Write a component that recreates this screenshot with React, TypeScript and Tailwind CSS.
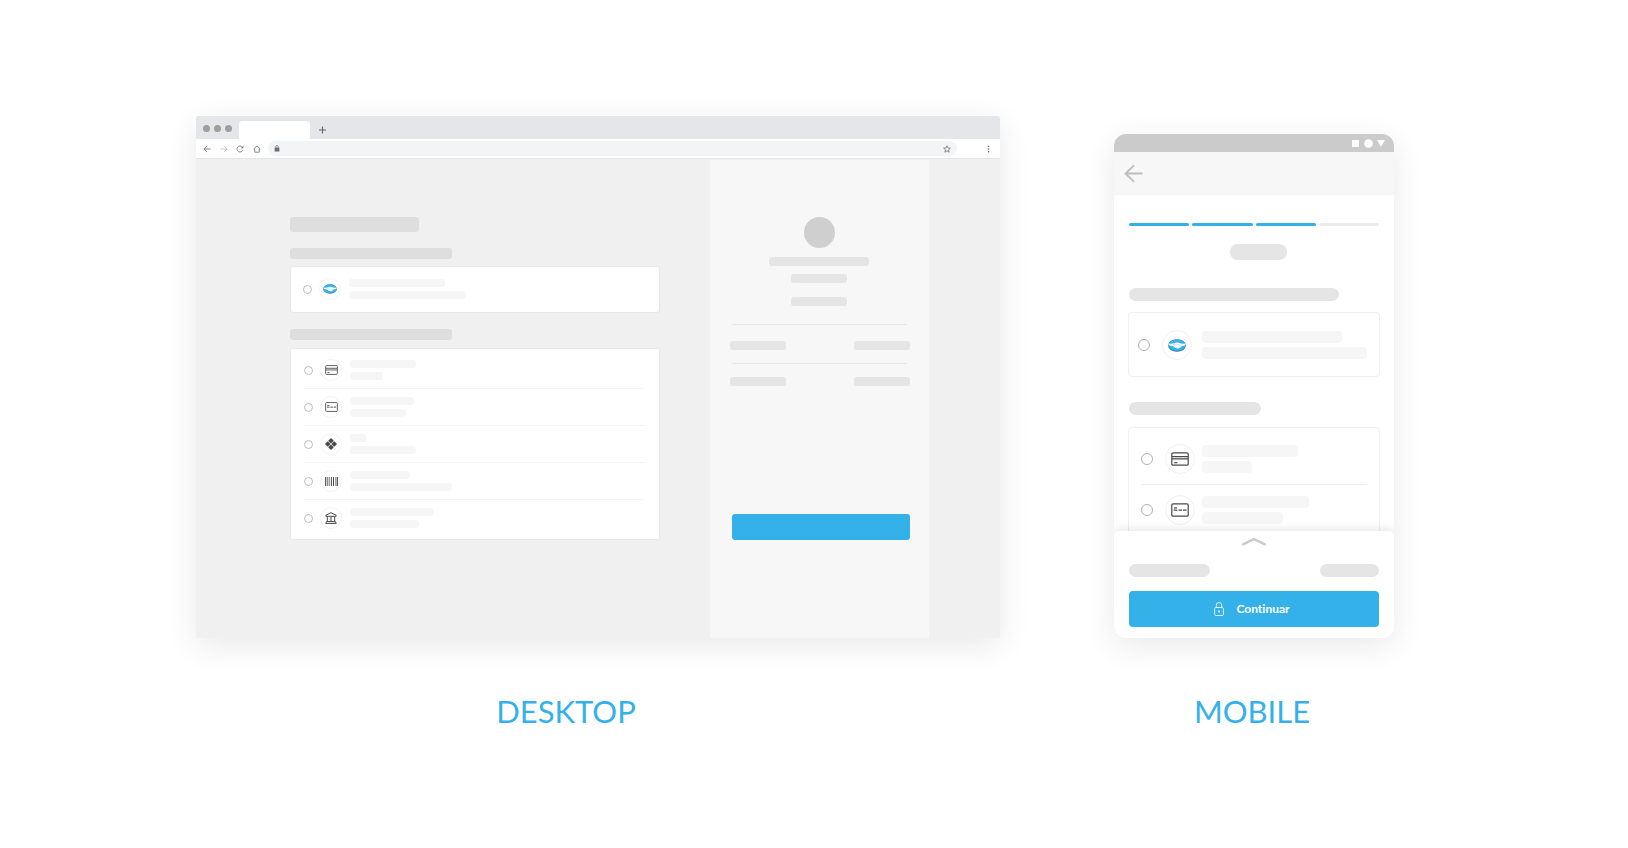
import type { ReactNode } from "react";
import { clsx } from "clsx";

function Bar({ className }: { className: string }) {
  return <div className={className} />;
}

function WalletIcon({ className }: { className: string }) {
  return (
    <svg viewBox="0 0 18 13" className={className} aria-hidden="true">
      <ellipse cx="9" cy="6.5" rx="8.900" ry="6.200" fill="#3a6ea8" />
      <ellipse cx="9" cy="6.200" rx="8.500" ry="5.600" fill="#2fb5ec" />
      <path
        d="M.7 4.500C3 5 5 4.600 6.900 3.900c1.300-.5 3-.5 4.300 0C13 4.600 15 5 17.300 4.500c.2.700.2 1.200.1 1.800-1.500.2-3.100.6-4.200 1.300-.6 1-1.500 1.600-2.600 1.700-.9.500-1.800.3-2.400-.3-1 .1-1.700-.4-2-1.200C4.600 7.100 2.600 6.500.6 6.300.5 5.700.5 5.100.7 4.500z"
        fill="#fff"
      />
      <path
        d="M6.900 4.100 5.600 5.900c.9.500 1.900.1 2.600-.7l1.300-.1 3.500 2.600M6.300 8.200l.9-.8M7.900 9l.8-.9"
        fill="none"
        stroke="#9db0cc"
        strokeWidth=".5"
      />
    </svg>
  );
}

function CardIcon({ className }: { className: string }) {
  return (
    <svg viewBox="0 0 18 14" className={className} fill="none" stroke="#4a4a4a" aria-hidden="true">
      <rect x=".8" y=".8" width="16.400" height="12.400" rx="1.300" strokeWidth="1.200" />
      <path d="M1 4.600h16M1 6.900h16" strokeWidth="1.200" />
      <path d="M3.200 10.700h3.200" strokeWidth="1.200" />
    </svg>
  );
}

function DebitIcon({ className }: { className: string }) {
  return (
    <svg viewBox="0 0 18 14" className={className} fill="none" stroke="#4a4a4a" aria-hidden="true">
      <rect x=".8" y=".8" width="16.400" height="12.400" rx="1.300" strokeWidth="1.200" />
      <path d="M2.700 7.200h3.600M7.500 7.200h3.500M12 7.200h3.500" strokeWidth="1.300" />
      <path d="M3 4.900h3" strokeWidth="1.600" stroke="#777" />
    </svg>
  );
}

function DiamondIcon({ className }: { className: string }) {
  return (
    <svg viewBox="0 0 16 16" className={className} fill="#4a4a4a" aria-hidden="true">
      <g transform="rotate(45 8 8)">
        <rect x="2.200" y="2.200" width="5.500" height="5.500" rx="1.100" />
        <rect x="8.300" y="2.200" width="5.500" height="5.500" rx="1.100" />
        <rect x="2.200" y="8.300" width="5.500" height="5.500" rx="1.100" />
        <rect x="8.300" y="8.300" width="5.500" height="5.500" rx="1.100" />
      </g>
    </svg>
  );
}

function BarcodeIcon({ className }: { className: string }) {
  return (
    <svg viewBox="0 0 13 9" className={className} stroke="#4a4a4a" aria-hidden="true">
      <path d="M.6 0v9M6.400 0v9M8.500 0v9M12.400 0v9" strokeWidth="1" />
      <path d="M2.300 0v9M10.900 0v9" strokeWidth="1.100" stroke="#777" />
      <path d="M4.200 0v9" strokeWidth=".8" />
    </svg>
  );
}

function BankIcon({ className }: { className: string }) {
  return (
    <svg viewBox="0 0 12 12" className={className} fill="none" stroke="#4a4a4a" strokeLinejoin="round" aria-hidden="true">
      <path d="M.9 4.300V3.200L6 .7l5.100 2.500v1.100zM2.300 4.500v5M6 4.500v5M9.700 4.500v5M1.500 9.600h9M.6 11.400h10.800M.9 11.400l.6-1.800M11.100 11.400l-.6-1.800" />
    </svg>
  );
}

type OptionProps = {
  group: string;
  label: string;
  icon: ReactNode;
  lines: [string, string];
};

function DesktopOption({ group, label, icon, lines }: OptionProps) {
  return (
    <label className="flex h-9 items-center">
      <input
        type="radio"
        name={group}
        aria-label={label}
        className="size-[9px] shrink-0 appearance-none rounded-full border border-[#bdbdbd] bg-white checked:border-[#35b1ea] checked:bg-[#35b1ea]"
      />
      <span className="ml-[7px] flex size-[22px] shrink-0 items-center justify-center rounded-full border border-[#f4f4f4]">
        {icon}
      </span>
      <span className="ml-2 flex flex-col gap-1">
        {lines.map((width, i) => (
          <span key={i} className={clsx("h-2 rounded-[3px] bg-[#f6f6f6]", width)} />
        ))}
      </span>
    </label>
  );
}

function MobileOption({ group, label, icon, lines, textGap }: OptionProps & { textGap: string }) {
  return (
    <label className="flex h-[50px] items-center">
      <input
        type="radio"
        name={group}
        aria-label={label}
        className="size-3 shrink-0 appearance-none rounded-full border border-[#b0b0b0] bg-white checked:border-[#35b1ea] checked:bg-[#35b1ea]"
      />
      <span className="ml-3 flex size-[30px] shrink-0 items-center justify-center rounded-full border border-[#f0f0f0]">
        {icon}
      </span>
      <span className={clsx("flex flex-col gap-1", textGap)}>
        {lines.map((width, i) => (
          <span key={i} className={clsx("h-3 rounded-[4px] bg-[#f6f6f6]", width)} />
        ))}
      </span>
    </label>
  );
}

const desktopMethods: { label: string; icon: ReactNode; lines: [string, string] }[] = [
  { label: "Crédito", icon: <CardIcon className="h-[10px] w-[13px]" />, lines: ["w-[66px]", "w-[33px]"] },
  { label: "Débito", icon: <DebitIcon className="h-[10px] w-[13px]" />, lines: ["w-16", "w-14"] },
  { label: "Pix", icon: <DiamondIcon className="size-3" />, lines: ["w-4", "w-[66px]"] },
  { label: "Boleto", icon: <BarcodeIcon className="h-[9px] w-[13px]" />, lines: ["w-[60px]", "w-[102px]"] },
  { label: "Transferencia", icon: <BankIcon className="size-3" />, lines: ["w-[84px]", "w-[69px]"] },
];

function BrowserChrome() {
  return (
    <header>
      <div className="flex h-[23px] items-end bg-[#e4e6ea]">
        <div className="ml-[7px] flex gap-1 self-center pt-px">
          <span className="size-[7px] rounded-full bg-[#9e9e9e]" />
          <span className="size-[7px] rounded-full bg-[#9e9e9e]" />
          <span className="size-[7px] rounded-full bg-[#9e9e9e]" />
        </div>
        <div className="ml-[7px] h-[18px] w-[71px] rounded-t-[4px] bg-white" />
        <button type="button" aria-label="Nueva pestaña" className="ml-2 flex h-[18px] w-2 items-center justify-center">
          <svg viewBox="0 0 8 8" className="size-2" stroke="#5f6368" strokeWidth="1.100" aria-hidden="true">
            <path d="M4.500 .5v7M1 4h7" />
          </svg>
        </button>
      </div>
      <div className="flex h-5 items-center border-b border-[#e4e5e8] bg-white pl-[3px]">
        <nav className="grid w-[66px] grid-cols-4">
          <button type="button" aria-label="Atrás" className="flex justify-center">
            <svg viewBox="0 0 8 8" className="size-2" fill="none" stroke="#6f7276" strokeWidth=".9" aria-hidden="true">
              <path d="M7.500 4H1M4 .9.900 4 4 7.100" />
            </svg>
          </button>
          <button type="button" aria-label="Adelante" className="flex justify-center">
            <svg viewBox="0 0 8 8" className="size-2" fill="none" stroke="#c0c2c5" strokeWidth=".9" aria-hidden="true">
              <path d="M.5 4H7M4 .9 7.100 4 4 7.100" />
            </svg>
          </button>
          <button type="button" aria-label="Recargar" className="flex justify-center">
            <svg viewBox="0 0 8 8" className="size-2" fill="none" stroke="#7d8085" strokeWidth=".9" aria-hidden="true">
              <path d="M6.800 5.200A3 3 0 1 1 6.300 2" />
              <path d="M7.400.6v2.600H4.800z" fill="#7d8085" stroke="none" />
            </svg>
          </button>
          <button type="button" aria-label="Inicio" className="flex justify-center">
            <svg viewBox="0 0 8 8" className="size-2" fill="none" stroke="#7d8085" strokeWidth=".9" aria-hidden="true">
              <path d="M.6 4.100 4 .9l3.400 3.200M1.700 3.500v3.700h4.600V3.500" />
            </svg>
          </button>
        </nav>
        <div className="ml-[3px] flex h-[15px] min-w-0 flex-1 items-center rounded-full bg-[#f2f4f6] pr-[6px] pl-[6px]">
          <svg viewBox="0 0 6 7" className="h-[7px] w-[6px] shrink-0" aria-hidden="true">
            <rect x=".6" y="2.400" width="4.800" height="4.200" rx=".4" fill="#6b6e73" />
            <path d="M1.700 2.600V1.800a1.300 1.300 0 0 1 2.600 0v.8" fill="none" stroke="#6b6e73" strokeWidth=".7" />
          </svg>
          <input type="text" aria-label="Dirección" className="h-3 min-w-0 flex-1 bg-transparent px-2 text-[10px] outline-none" />
          <button type="button" aria-label="Favorito">
            <svg viewBox="0 0 10 10" className="block size-2" fill="none" stroke="#7d8085" strokeWidth="1.100" aria-hidden="true">
              <path d="M5 .9l1.200 2.800 3 .3-2.300 2 .7 3L5 7.400 2.400 9l.7-3L.8 4l3-.3z" />
            </svg>
          </button>
        </div>
        <button type="button" aria-label="Menú" className="flex w-[43px] justify-end pr-[10px]">
          <svg viewBox="0 0 3 8" className="h-2 w-[3px]" fill="#5f6368" aria-hidden="true">
            <circle cx="1.500" cy="1.200" r=".8" />
            <circle cx="1.500" cy="4" r=".8" />
            <circle cx="1.500" cy="6.800" r=".8" />
          </svg>
        </button>
      </div>
    </header>
  );
}

function DesktopSummary() {
  return (
    <aside className="mt-px flex w-[219px] shrink-0 flex-col bg-[#f7f7f7] pt-[57px] pr-[19px] pb-[98px] pl-5">
      <div className="flex flex-col items-center pr-[2px]">
        <Bar className="size-[31px] rounded-full bg-[#cfcfcf]" />
        <Bar className="mt-[9px] h-[9px] w-[100px] rounded-[3px] bg-[#e5e5e5]" />
        <Bar className="mt-2 h-[9px] w-14 rounded-[3px] bg-[#e5e5e5]" />
        <Bar className="mt-[14px] h-[9px] w-14 rounded-[3px] bg-[#e5e5e5]" />
      </div>
      <div className="mt-[18px] mr-[3px] ml-[2px] h-px bg-[#e8e8e8]" />
      <div className="mt-4 flex justify-between">
        <Bar className="h-[9px] w-14 rounded-[3px] bg-[#e5e5e5]" />
        <Bar className="h-[9px] w-14 rounded-[3px] bg-[#e5e5e5]" />
      </div>
      <div className="mt-[13px] mr-[3px] ml-[2px] h-px bg-[#e8e8e8]" />
      <div className="mt-[13px] flex justify-between">
        <Bar className="h-[9px] w-14 rounded-[3px] bg-[#e5e5e5]" />
        <Bar className="h-[9px] w-14 rounded-[3px] bg-[#e5e5e5]" />
      </div>
      <button type="button" aria-label="Continuar" className="mt-auto ml-[2px] h-[26px] rounded-[3px] bg-[#35b1ea]" />
    </aside>
  );
}

function DesktopWindow() {
  return (
    <div className="overflow-hidden rounded-t-[3px] bg-[#f0f0f0] shadow-[0_8px_32px_rgba(0,0,0,0.09)]">
      <BrowserChrome />
      <div className="flex">
        <section className="min-w-0 flex-1 pt-[58px] pr-[50px] pb-[98px] pl-[94px]">
          <Bar className="h-[15px] w-[129px] rounded-[3px] bg-[#dedede]" />
          <Bar className="mt-4 h-[11px] w-[162px] rounded-[3px] bg-[#dedede]" />
          <div className="mt-[7px] rounded-[3px] border border-[#e8e8e8] bg-white pt-1 pr-[14px] pb-[5px] pl-3">
            <DesktopOption
              group="desktop-payment"
              label="Mercado Pago"
              icon={<WalletIcon className="h-[10px] w-[14px]" />}
              lines={["w-24", "w-[117px]"]}
            />
          </div>
          <Bar className="mt-4 h-[11px] w-[162px] rounded-[3px] bg-[#dedede]" />
          <div className="mt-2 divide-y divide-[#f4f4f4] rounded-[3px] border border-[#e8e8e8] bg-white py-[3px] pr-[14px] pl-[13px]">
            {desktopMethods.map((method) => (
              <div key={method.label}>
                <DesktopOption group="desktop-payment" {...method} />
              </div>
            ))}
          </div>
        </section>
        <DesktopSummary />
        <div className="w-[71px] shrink-0" />
      </div>
    </div>
  );
}

function Phone() {
  return (
    <div className="overflow-hidden rounded-[12px] bg-white shadow-[0_8px_32px_rgba(0,0,0,0.09)]">
      <div className="flex h-[18px] items-center justify-end bg-[#cbcbcb] pr-[9px]">
        <svg viewBox="0 0 34 9" className="h-[9px] w-[34px]" fill="#fff" aria-hidden="true">
          <rect x="1" y="1" width="7" height="7" />
          <circle cx="17.500" cy="4.500" r="4.300" />
          <path d="M26 1h8l-4 7z" />
        </svg>
      </div>
      <header className="flex h-[43px] items-center bg-[#f7f7f7] pl-[10px]">
        <button type="button" aria-label="Volver">
          <svg viewBox="0 0 19 18" className="block h-[18px] w-[19px]" fill="none" stroke="#bdbdbd" strokeWidth="1.800" strokeLinecap="round" aria-hidden="true">
            <path d="M17.800 8.500H1.500M9.500.9 1.500 8.500l8 7.800" />
          </svg>
        </button>
      </header>
      <section className="h-[340px] overflow-hidden px-[15px] pt-7">
        <div className="grid grid-cols-4 gap-[3px]">
          <Bar className="h-[3px] rounded-full bg-[#35b1ea]" />
          <Bar className="h-[3px] rounded-full bg-[#35b1ea]" />
          <Bar className="h-[3px] rounded-full bg-[#35b1ea]" />
          <Bar className="h-[3px] rounded-full bg-[#ebebeb]" />
        </div>
        <div className="mt-[18px] flex justify-center pl-2">
          <Bar className="h-4 w-[57px] rounded-full bg-[#e5e5e5]" />
        </div>
        <Bar className="mt-7 h-[13px] w-[210px] rounded-full bg-[#e5e5e5]" />
        <div className="-mx-px mt-[11px] rounded-[4px] border border-[#efefef] pt-[7px] pb-[6px] pl-[9px]">
          <MobileOption
            group="mobile-payment"
            label="Mercado Pago"
            icon={<WalletIcon className="h-[13px] w-[18px]" />}
            lines={["w-[140px]", "w-[165px]"]}
            textGap="ml-[10px]"
          />
        </div>
        <Bar className="mt-[25px] h-[13px] w-[132px] rounded-full bg-[#e5e5e5]" />
        <div className="-mx-px mt-3 divide-y divide-[#efefef] rounded-[4px] border border-[#efefef] px-3 py-[6px]">
          <div>
            <MobileOption
              group="mobile-payment"
              label="Crédito"
              icon={<CardIcon className="h-[14px] w-[18px]" />}
              lines={["w-24", "w-[50px]"]}
              textGap="ml-[7px]"
            />
          </div>
          <div>
            <MobileOption
              group="mobile-payment"
              label="Débito"
              icon={<DebitIcon className="h-[14px] w-[18px]" />}
              lines={["w-[107px]", "w-[81px]"]}
              textGap="ml-[7px]"
            />
          </div>
        </div>
      </section>
      <footer className="relative -mt-1 rounded-t-[5px] bg-white px-[15px] pt-[6px] pb-[11px] shadow-[0_-2px_8px_rgba(0,0,0,0.1)]">
        <button type="button" aria-label="Ver detalle" className="mx-auto block">
          <svg viewBox="0 0 26 9" className="block h-[9px] w-[26px]" fill="none" stroke="#c9c9c9" strokeWidth="2.400" strokeLinecap="round" strokeLinejoin="round" aria-hidden="true">
            <path d="M2 7.300 13 2.100l11 5.200" />
          </svg>
        </button>
        <div className="mt-[18px] flex justify-between">
          <Bar className="h-[13px] w-[81px] rounded-full bg-[#e5e5e5]" />
          <Bar className="h-[13px] w-[59px] rounded-full bg-[#e5e5e5]" />
        </div>
        <button
          type="button"
          className="mt-[14px] flex h-9 w-full items-center justify-center gap-3 rounded-[4px] bg-[#35b1ea] pr-1 font-['Lato',sans-serif] text-[12px] leading-4 font-bold text-white [font-variant-ligatures:none]"
        >
          <svg viewBox="0 0 10 14" className="h-[14px] w-[10px]" fill="none" stroke="#d9f0fb" aria-hidden="true">
            <rect x=".6" y="5.500" width="8.800" height="8" rx="1.200" />
            <path d="M2.300 5.400V3.200a2.700 2.700 0 0 1 5.400 0v2.200" />
            <circle cx="5" cy="9.500" r=".9" fill="#fff" stroke="none" />
          </svg>
          Continuar
        </button>
      </footer>
    </div>
  );
}

export default function App() {
  return (
    <main className="flex min-h-screen items-start justify-center bg-white pt-[116px] pr-[38px] font-['Lato',sans-serif]">
      <div className="flex flex-1 items-end justify-center gap-[114px]">
        <figure className="min-w-0 max-w-[804px] flex-1">
          <DesktopWindow />
          <figcaption className="mt-[53px] pr-16 text-center text-[31px] leading-10 text-[#35b1ea]">DESKTOP</figcaption>
        </figure>
        <figure className="w-[280px] shrink-0">
          <Phone />
          <figcaption className="mt-[53px] pr-1 text-center text-[31px] leading-10 text-[#35b1ea]">MOBILE</figcaption>
        </figure>
      </div>
    </main>
  );
}
